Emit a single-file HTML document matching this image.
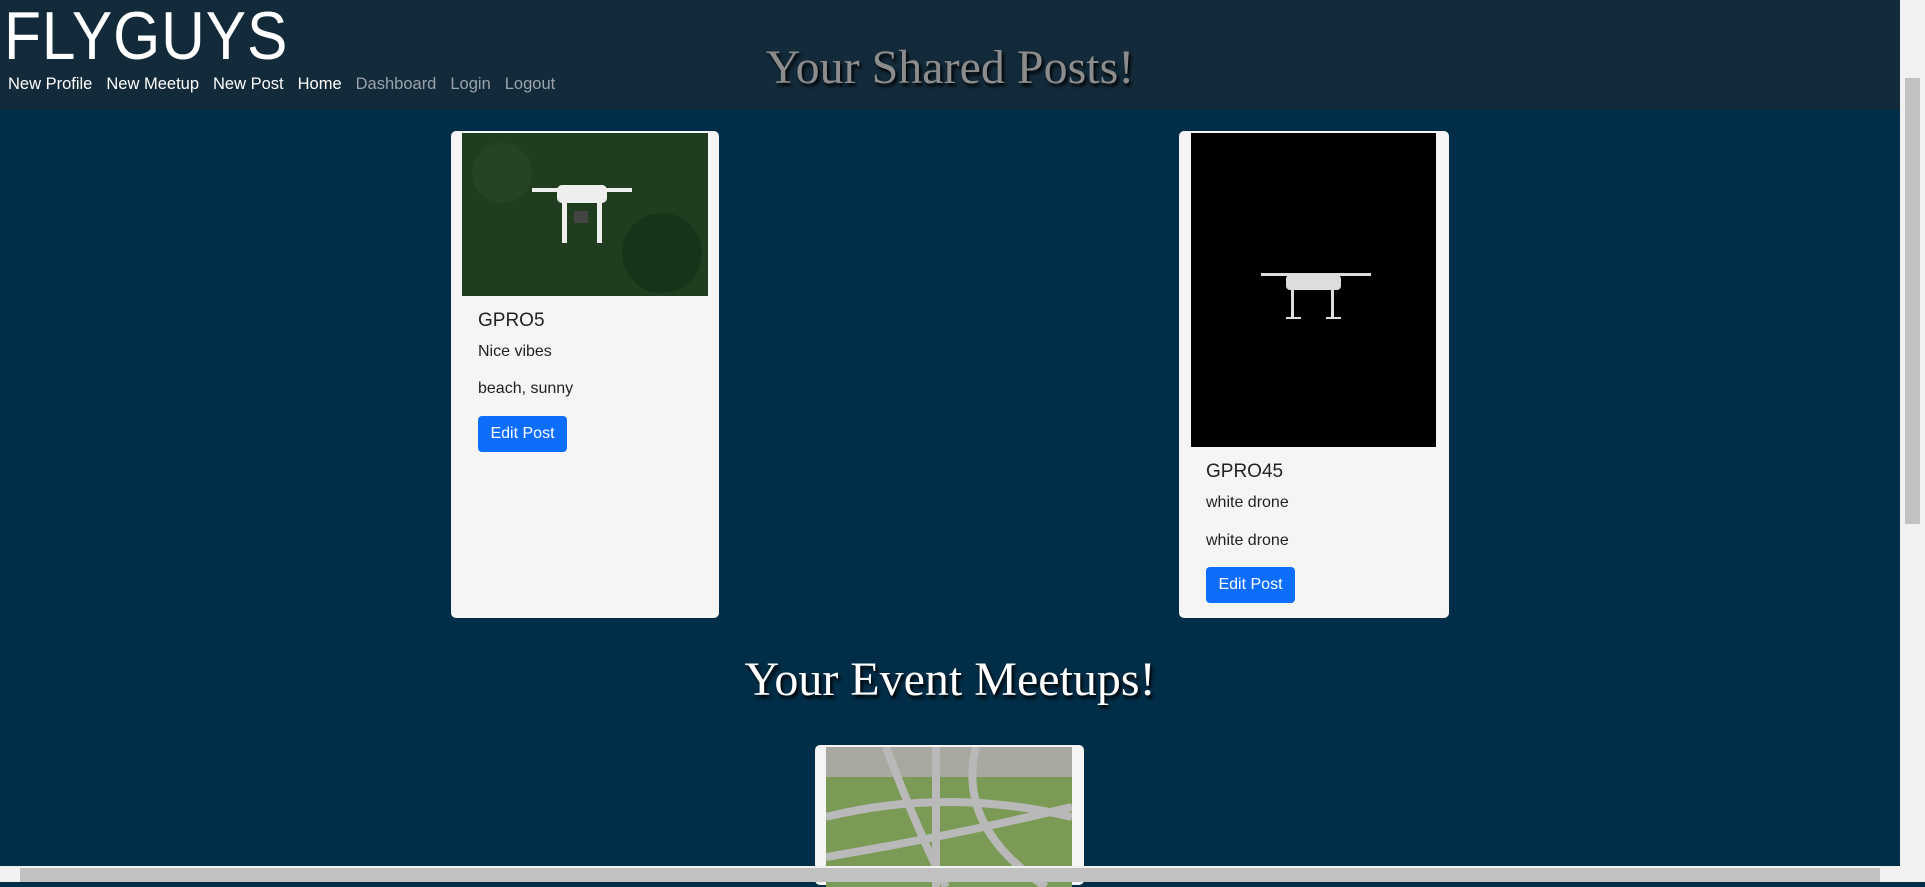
<!DOCTYPE html>
<html><head><meta charset="utf-8"><style>
html,body{margin:0;padding:0;}
body{width:1925px;height:882px;overflow:hidden;position:relative;background:#002d47;font-family:"Liberation Sans",sans-serif;}
.hdr{position:absolute;left:0;top:0;width:1900px;height:110px;background:#132a3a;}
.logo{position:absolute;left:4px;top:2px;font-family:"Liberation Sans Narrow","Liberation Sans",sans-serif;font-size:68px;color:#fff;letter-spacing:1px;line-height:68px;font-weight:normal;transform:scaleX(0.89);transform-origin:left;}
.nav{position:absolute;left:8px;top:75px;font-size:16.5px;color:#fff;}
.nav span{margin-right:14px;}
.nav .g{color:#9aa3ab;}
h1{position:absolute;margin:0;width:1900px;text-align:center;font-family:"Liberation Serif",serif;font-weight:normal;font-size:48px;text-shadow:2px 3px 3px #000;}
.card{position:absolute;background:#f5f5f5;border-radius:5px;}
.card .img{position:absolute;overflow:hidden;}
.t{position:absolute;color:#222;}
.btn{position:absolute;background:#0d6efd;color:#fff;border-radius:4px;font-size:16px;text-align:center;line-height:36px;}
.vs{position:absolute;right:0;top:0;width:25px;height:866px;background:#f1f1f1;z-index:5;}
.vs .th{position:absolute;left:5px;top:78px;width:15px;height:446px;background:#c1c1c1;}
.hs{position:absolute;left:0;bottom:0;width:1925px;height:16px;background:#f1f1f1;z-index:6;}
.hs .th{position:absolute;left:20px;top:2px;width:1860px;height:14px;background:#c1c1c1;}
</style></head><body>
<div class="hdr">
 <div class="logo">FLYGUYS</div>
 <div class="nav"><span>New Profile</span><span>New Meetup</span><span>New Post</span><span>Home</span><span class="g">Dashboard</span><span class="g">Login</span><span class="g">Logout</span></div>
</div>
<h1 style="top:40px;color:#8c8c8c;">Your Shared Posts!</h1>

<div class="card" style="left:451px;top:131px;width:268px;height:487px;">
 <div class="img" style="left:11px;top:2px;width:246px;height:163px;background:#1f3a1e;">
  <svg width="246" height="163"><rect width="246" height="163" fill="#203d20"/><circle cx="40" cy="40" r="30" fill="#2b4a26" opacity=".6"/><circle cx="200" cy="120" r="40" fill="#163016" opacity=".7"/>
  <g fill="#eee"><rect x="70" y="55" width="100" height="4"/><rect x="95" y="52" width="50" height="18" rx="5"/><rect x="100" y="70" width="5" height="40"/><rect x="135" y="70" width="5" height="40"/><rect x="112" y="78" width="14" height="12" fill="#444"/></g></svg>
 </div>
 <div class="t" style="left:27px;top:179px;font-size:19px;">GPRO5</div>
 <div class="t" style="left:27px;top:212px;font-size:16px;">Nice vibes</div>
 <div class="t" style="left:27px;top:249px;font-size:16px;">beach, sunny</div>
 <div class="btn" style="left:27px;top:285px;width:89px;">Edit Post</div>
</div>

<div class="card" style="left:1179px;top:131px;width:270px;height:487px;">
 <div class="img" style="left:12px;top:2px;width:245px;height:314px;background:#000;">
  <svg width="245" height="314"><g fill="#ddd"><rect x="70" y="140" width="110" height="3"/><rect x="95" y="142" width="55" height="15" rx="4"/><rect x="100" y="157" width="3" height="28"/><rect x="140" y="157" width="3" height="28"/><rect x="95" y="184" width="15" height="2"/><rect x="135" y="184" width="15" height="2"/></g></svg>
 </div>
 <div class="t" style="left:27px;top:330px;font-size:19px;">GPRO45</div>
 <div class="t" style="left:27px;top:363px;font-size:16px;">white drone</div>
 <div class="t" style="left:27px;top:401px;font-size:16px;">white drone</div>
 <div class="btn" style="left:27px;top:436px;width:89px;">Edit Post</div>
</div>

<h1 style="top:652px;color:#fff;">Your Event Meetups!</h1>

<div class="card" style="left:815px;top:745px;width:269px;height:140px;">
 <div class="img" style="left:11px;top:2px;width:246px;height:140px;background:#6f8a4a;">
  <svg width="246" height="140"><rect width="246" height="140" fill="#7a9a55"/><rect x="0" y="0" width="246" height="30" fill="#a8a8a0"/><g stroke="#b9b9b9" stroke-width="8" fill="none"><path d="M0 70 Q120 40 246 70"/><path d="M60 0 Q90 80 120 140"/><path d="M110 0 L110 140"/><path d="M0 110 Q120 90 246 60"/><path d="M150 0 Q130 80 220 140"/></g></svg>
 </div>
</div>

<div class="vs"><div class="th"></div></div>
<div class="hs"><div class="th"></div></div>
</body></html>
